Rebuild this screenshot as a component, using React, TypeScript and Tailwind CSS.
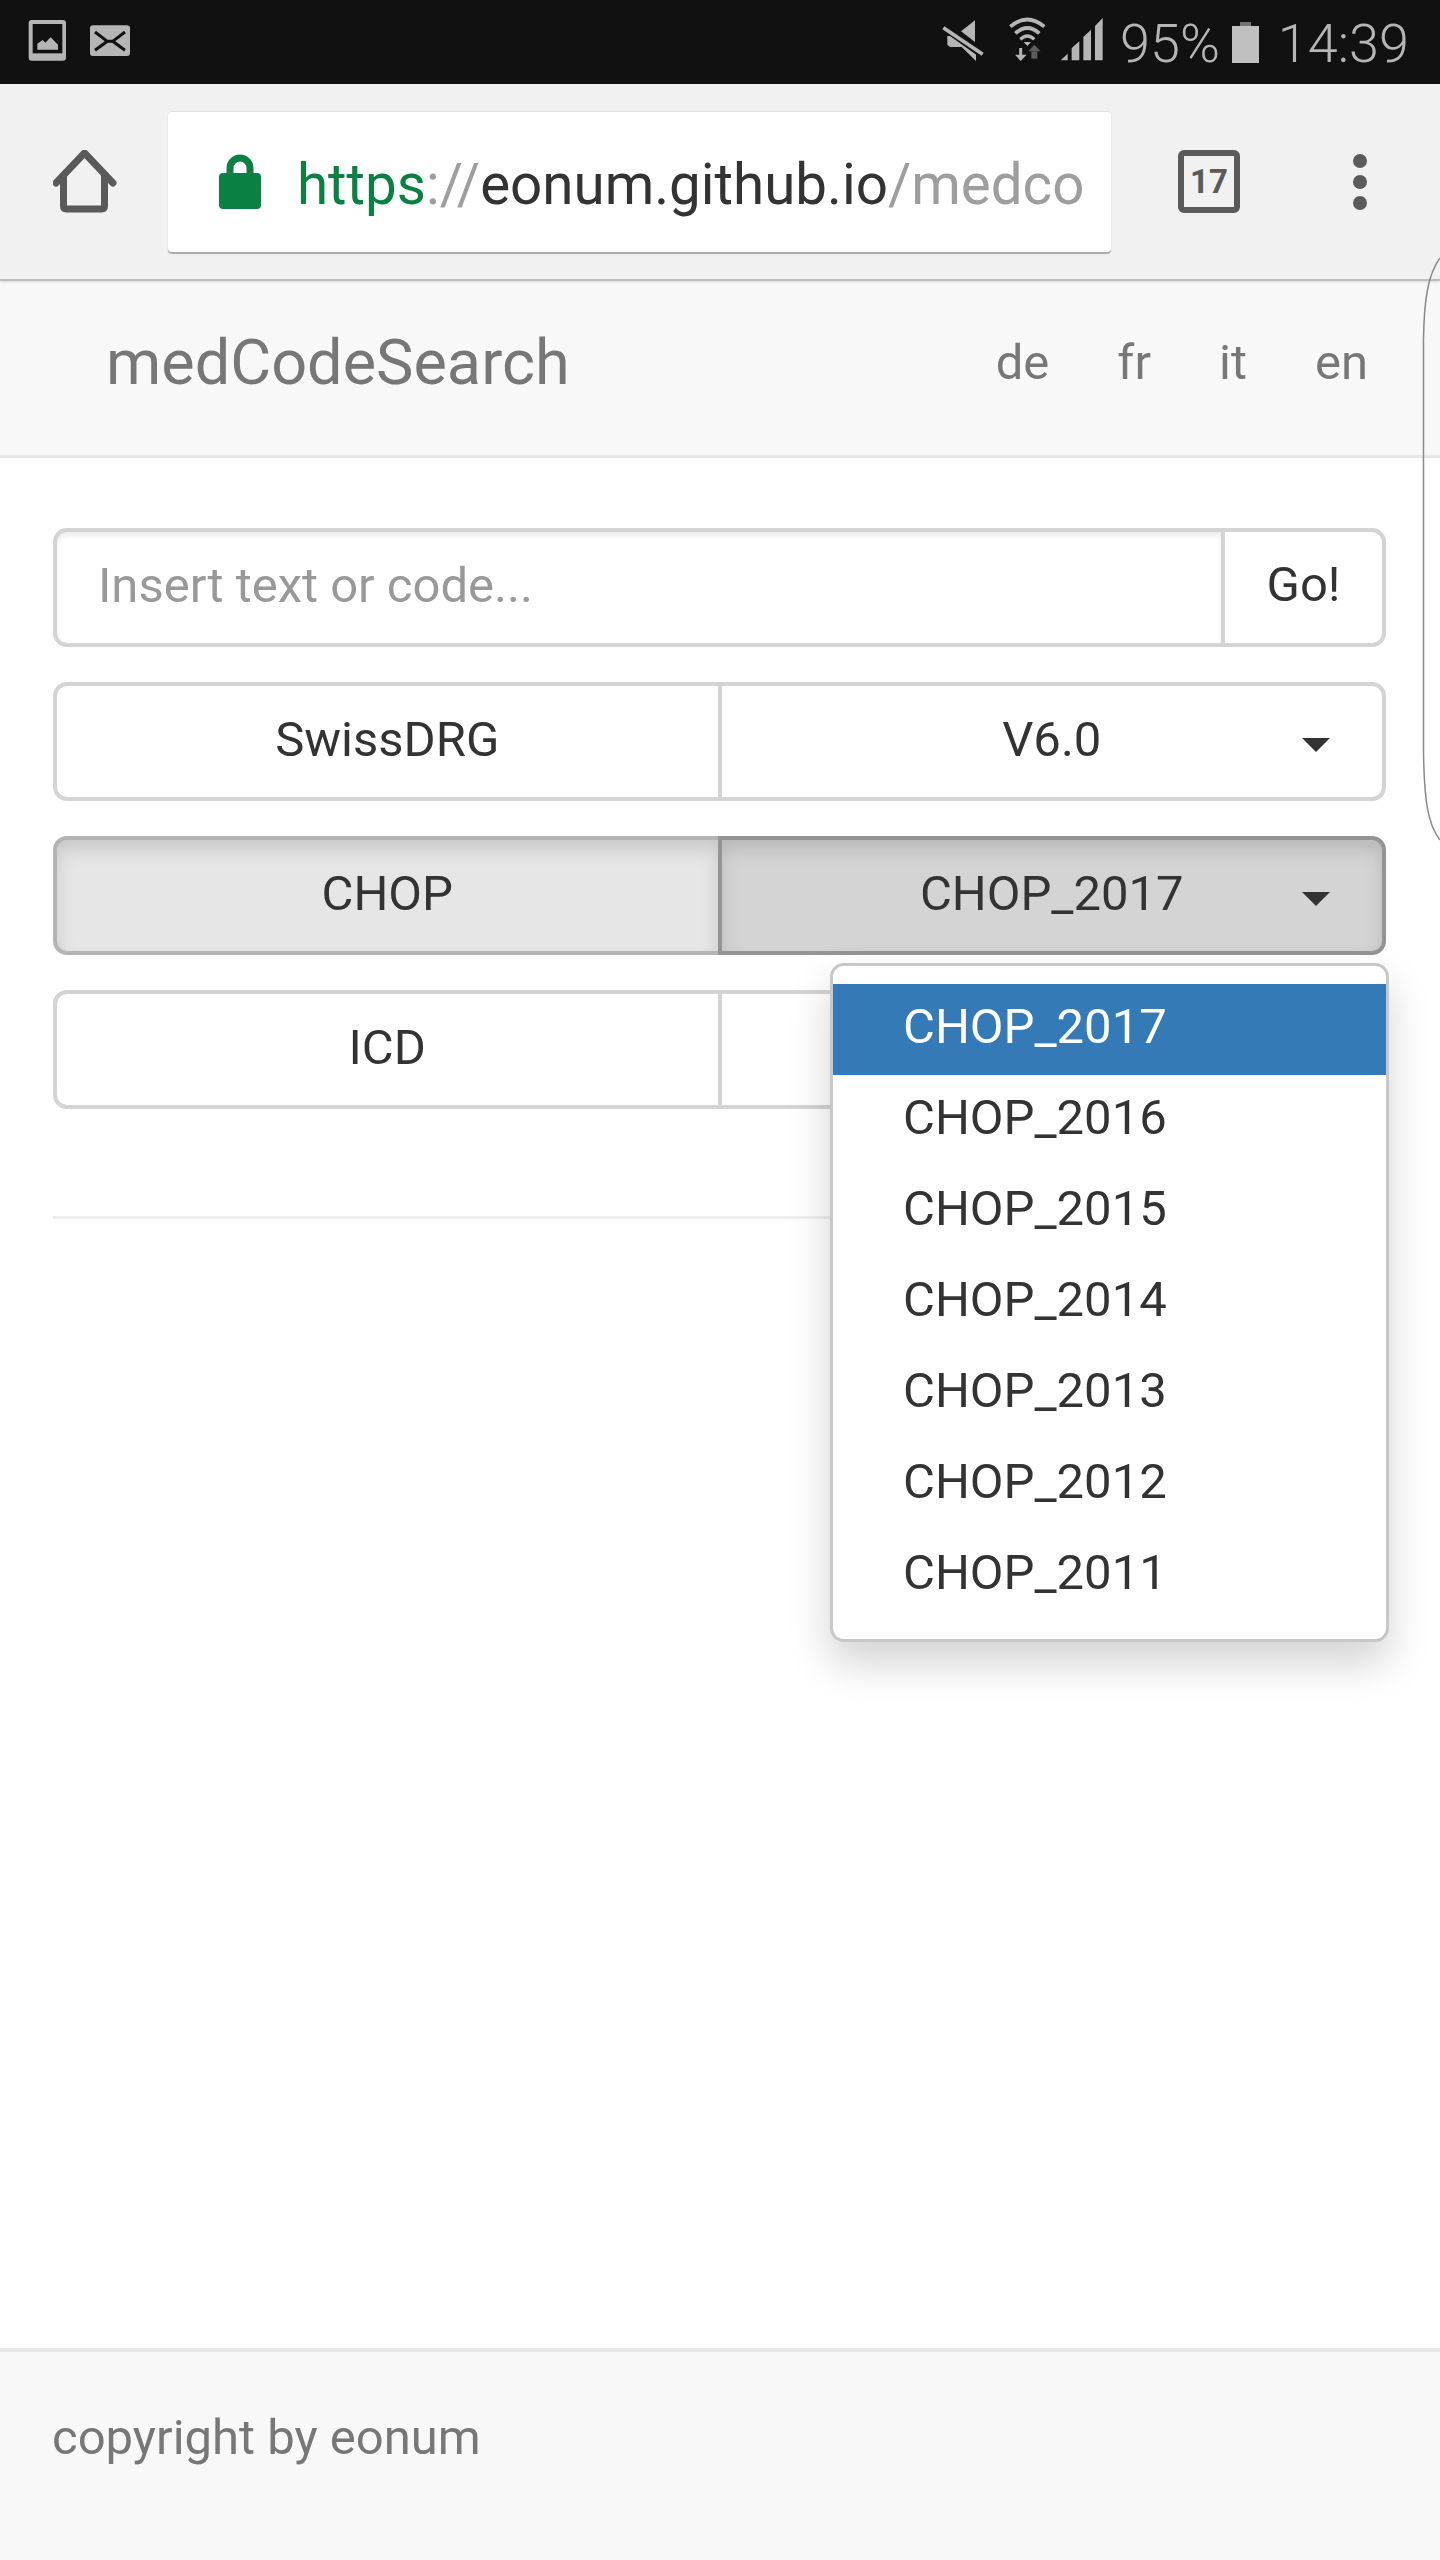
import React from 'react';

const chopVersions = ['CHOP_2017', 'CHOP_2016', 'CHOP_2015', 'CHOP_2014', 'CHOP_2013', 'CHOP_2012', 'CHOP_2011'];

const Caret = () => (
  <span className="absolute right-[52px] top-[52px] h-0 w-0 border-x-[14px] border-t-[14px] border-x-transparent border-t-[#333]" />
);

const StatusLeftIcons = () => (
  <svg width="120" height="60" viewBox="0 0 360 180" aria-hidden="true">
    <rect x="26" y="24" width="112" height="122" rx="9" fill="#b5b5b5" />
    <rect x="38" y="36" width="89" height="88" fill="#111" />
    <polygon points="52,113 52,95 68,84 76,92 92,76 114,98 114,113" fill="#b5b5b5" />
    <rect x="210" y="40" width="120" height="92" rx="9" fill="#b5b5b5" />
    <path d="M225 60 L262 88 H278 L315 60 M225 115 L262 88 M278 88 L315 115" fill="none" stroke="#111" strokeWidth="9" />
  </svg>
);

const StatusRightIcons = () => (
  <svg width="180" height="60" viewBox="0 0 540 180" aria-hidden="true">
    {/* sound off */}
    <polygon points="135,25 135,90 93,58" fill="#b5b5b5" />
    <polygon points="52,72 70,72 138,125 138,147 95,105 60,105 52,98" fill="#b5b5b5" />
    <path d="M40 44 L158 128" stroke="#111" strokeWidth="22" />
    <path d="M40 47 L158 127" stroke="#b5b5b5" strokeWidth="11" />
    {/* wifi */}
    <path d="M241 44 Q292 1 343 44" fill="none" stroke="#b5b5b5" strokeWidth="11" />
    <path d="M256 64 Q292 32 328 64" fill="none" stroke="#b5b5b5" strokeWidth="11" />
    <path d="M271 82 Q292 62 313 82" fill="none" stroke="#b5b5b5" strokeWidth="10" />
    <polygon points="281,90 303,90 292,102" fill="#b5b5b5" />
    <path d="M272 108 V132" stroke="#b5b5b5" strokeWidth="9" />
    <polygon points="255,128 290,128 272,147" fill="#b5b5b5" />
    <polygon points="295,118 332,118 313,98" fill="#5c5c5c" />
    <rect x="304" y="118" width="18" height="22" fill="#5c5c5c" />
    {/* signal */}
    <polygon points="392,145 413,125 413,145" fill="#b5b5b5" />
    <polygon points="425,145 425,108 448,88 448,145" fill="#b5b5b5" />
    <polygon points="460,145 460,75 483,53 483,145" fill="#b5b5b5" />
    <polygon points="495,145 495,42 518,18 518,145" fill="#b5b5b5" />
  </svg>
);

const Battery = () => (
  <svg width="28" height="42" viewBox="0 0 28 42" aria-hidden="true">
    <rect x="9" y="0" width="11" height="5" fill="#757575" />
    <rect x="1" y="4" width="27" height="37" fill="#c0c0c0" />
  </svg>
);

const HomeIcon = () => (
  <svg width="64" height="64" viewBox="0 0 64 64" fill="none" stroke="#5a5a5a" aria-hidden="true">
    <path d="M3 33 L31.500 3 L60 33" strokeWidth="7" strokeLinecap="round" strokeLinejoin="round" />
    <path d="M10.500 25 V56 Q10.500 59 13.500 59 H48.500 Q51.500 59 51.500 56 V25" strokeWidth="7" />
  </svg>
);

const LockIcon = () => (
  <svg width="42" height="56" viewBox="0 0 42 56" aria-hidden="true">
    <path d="M11 22 V14 A10 10 0 0 1 31 14 V22" fill="none" stroke="#0b8043" strokeWidth="7" />
    <rect x="0" y="19" width="42" height="36" rx="4" fill="#0b8043" />
  </svg>
);

const Toolbar = () => (
  <div className="relative z-10 flex h-[197px] items-center border-b-[2px] border-[#bdbdbd] bg-[#f1f1f1] pl-[53px] shadow-[0_1px_2px_rgba(0,0,0,0.12)]">
    <HomeIcon />
    <div className="ml-[51px] flex h-[141px] w-[943px] items-center overflow-hidden whitespace-nowrap rounded-[4px] border-t border-[#e0e0e0] bg-white pl-[51px] text-[56.500px] shadow-[0_2px_1px_rgba(0,0,0,0.3)]">
      <LockIcon />
      <span className="ml-[36px] mt-[6px] text-[#9e9e9e]">
        <span className="text-[#0b8043]">https</span>://<span className="text-[#333]">eonum.github.io</span>/medco
      </span>
    </div>
    <div className="ml-[67px] flex h-[63px] w-[62px] items-center justify-center rounded-[6px] border-[6px] border-[#5a5a5a] text-[33px] font-bold text-[#5a5a5a]">
      17
    </div>
    <div className="ml-[113px] flex flex-col gap-[7px]">
      <span className="h-[14px] w-[14px] rounded-full bg-[#5a5a5a]" />
      <span className="h-[14px] w-[14px] rounded-full bg-[#5a5a5a]" />
      <span className="h-[14px] w-[14px] rounded-full bg-[#5a5a5a]" />
    </div>
  </div>
);

const PickerRow = ({ left, right, active, children }: { left: string; right: string; active?: boolean; children?: React.ReactNode }) => (
  <div className="relative flex h-[119px]">
    <button
      type="button"
      className={
        active
          ? 'flex-1 rounded-l-[14px] border-[4px] border-[#b4b4b4] bg-[#e6e6e6] pb-[4px] text-[#333] shadow-[inset_0_10px_17px_rgba(0,0,0,0.125)]'
          : 'flex-1 rounded-l-[14px] border-[4px] border-[#d4d4d4] bg-white pb-[4px] text-[#333]'
      }
    >
      {left}
    </button>
    <button
      type="button"
      className={
        active
          ? 'relative -ml-[4px] flex-1 rounded-r-[14px] border-[4px] border-[#949494] bg-[#d4d4d4] pb-[4px] text-[#333] shadow-[inset_0_10px_17px_rgba(0,0,0,0.125)]'
          : 'relative -ml-[4px] flex-1 rounded-r-[14px] border-[4px] border-[#d4d4d4] bg-white pb-[4px] text-[#333]'
      }
    >
      {right}
      <Caret />
    </button>
    {children}
  </div>
);

export default function App() {
  return (
    <div className="relative flex h-[2560px] w-[1440px] flex-col overflow-hidden bg-white font-['Roboto',sans-serif] text-[49px] leading-[70px] text-[#333]">
      {/* status bar */}
      <div className="flex h-[84px] items-center bg-[#111] text-[54px] font-light leading-none text-[#b5b5b5]">
        <div className="ml-[20px]">
          <StatusLeftIcons />
        </div>
        <div className="ml-[790px]">
          <StatusRightIcons />
        </div>
        <span className="ml-[10px] mt-[4px]">95%</span>
        <div className="ml-[11px] mt-[1px]">
          <Battery />
        </div>
        <span className="ml-[19px] mt-[4px]">14:39</span>
      </div>

      <Toolbar />

      {/* navbar */}
      <nav className="flex h-[177px] shrink-0 items-center justify-between border-b-[3px] border-[#e7e7e7] bg-[#f8f8f8] pb-[10px] pl-[106px] pr-[72px] text-[#777]">
        <a className="text-[63px]">medCodeSearch</a>
        <div className="flex gap-[68px]">
          <a>de</a>
          <a>fr</a>
          <a>it</a>
          <a>en</a>
        </div>
      </nav>

      <main className="flex flex-col gap-[35px] pl-[53px] pr-[54px] pt-[70px]">
        <div className="flex h-[119px]">
          <input
            type="text"
            placeholder="Insert text or code..."
            className="min-w-0 flex-1 rounded-l-[14px] border-[4px] border-[#d4d4d4] bg-white pb-[4px] pl-[41px] shadow-[inset_0_4px_4px_rgba(0,0,0,0.075)] placeholder:text-[#999]"
          />
          <button type="button" className="-ml-[4px] w-[165px] rounded-r-[14px] border-[4px] border-[#d4d4d4] bg-white pb-[6px] text-[#333]">
            Go!
          </button>
        </div>
        <PickerRow left="SwissDRG" right="V6.0" />
        <PickerRow left="CHOP" right="CHOP_2017" active>
          <ul className="absolute right-[-3px] top-full z-20 mt-[8px] w-[559px] rounded-[14px] border-[3px] border-[#c8c8c8] bg-white py-[18px] shadow-[0_21px_42px_rgba(0,0,0,0.175)]">
            {chopVersions.map((version, i) => (
              <li
                key={version}
                className={i === 0 ? 'bg-[#337ab7] pb-[13.500px] pl-[70px] pt-[7.500px] text-white' : 'pb-[13.500px] pl-[70px] pt-[7.500px] text-[#333]'}
              >
                {version}
              </li>
            ))}
          </ul>
        </PickerRow>
        <PickerRow left="ICD" right="" />
        <hr className="mt-[72px] border-t-[3px] border-[#eee]" />
      </main>

      <footer className="mt-auto flex h-[212px] items-center border-t-[4px] border-[#e7e7e7] bg-[#f8f8f8] pb-[36px] pl-[52px] text-[#777]">
        copyright by eonum
      </footer>

      {/* edge swipe outline laid over the page */}
      <svg className="pointer-events-none absolute right-0 top-[250px] z-30" width="20" height="600" viewBox="0 0 20 600" fill="none" aria-hidden="true">
        <path d="M20 8 C8 24 4 50 3.500 90 V500 C4 550 8 575 20 590" stroke="#8a8a8a" strokeWidth="1.500" />
      </svg>
    </div>
  );
}
